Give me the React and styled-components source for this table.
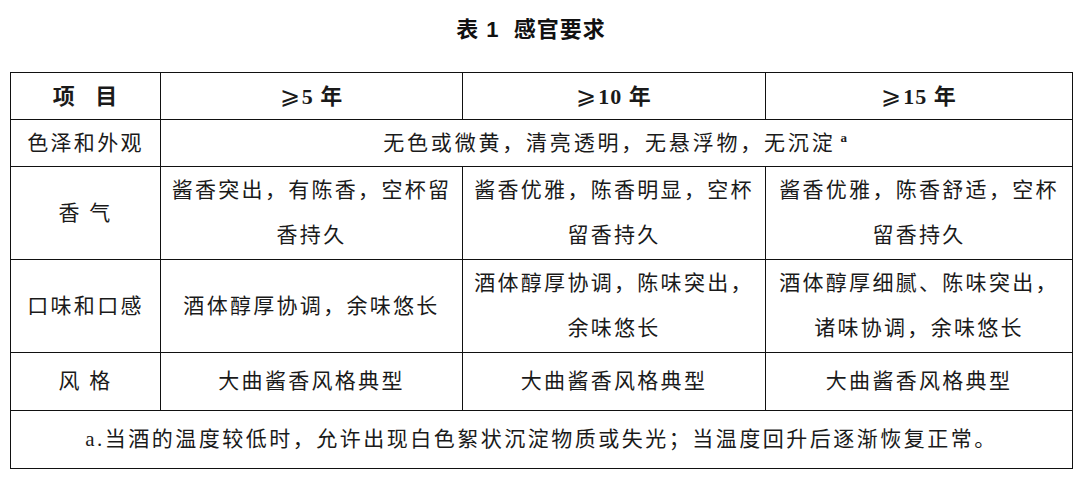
import styled, { createGlobalStyle } from "styled-components";

const GlobalStyle = createGlobalStyle`
  html, body {
    margin: 0;
    padding: 0;
    background: #fff;
  }
  body {
    font-family: "Liberation Serif", "Noto Sans CJK SC", serif;
    color: #1a1a1a;
  }
`;

const Page = styled.div`
  width: 1083px;
  height: 485px;
  padding: 17px 0 0 10px;
  box-sizing: border-box;
`;

const Title = styled.h1`
  margin: 0 0 29px 0;
  width: 1042px;
  text-align: center;
  font-family: "Liberation Sans", "Noto Sans CJK SC", sans-serif;
  font-size: 22px;
  line-height: 26px;
  font-weight: 700;
  letter-spacing: 1px;
  color: #111;
`;

const Table = styled.table`
  border-collapse: collapse;
  table-layout: fixed;
  width: 1062px;
`;

const Row = styled.tr`
  height: ${(p) => p.h}px;
`;

const Cell = styled.td`
  border: 1px solid #111;
  padding: 0;
  text-align: center;
  vertical-align: middle;
  font-size: 21px;
  letter-spacing: ${(p) => p.spacing || 2.3}px;
  line-height: 45px;
  font-weight: 400;
  white-space: nowrap;
`;

const HeadCell = styled(Cell)`
  font-weight: 700;
  font-size: 22px;
  letter-spacing: 1px;
`;

const Ge = styled.span`
  font-family: "DejaVu Serif", serif;
  font-weight: 400;
  font-size: 24px;
  margin-right: 1px;
`;

const Sup = styled.sup`
  font-size: 13px;
  font-weight: 700;
  vertical-align: 8px;
  line-height: 0;
  margin-left: 5px;
`;

const Year = ({ n }) => (
  <HeadCell>
    <Ge>⩾</Ge>
    {n} 年
  </HeadCell>
);

export default function App() {
  return (
    <Page>
      <GlobalStyle />
      <Title>表 1&nbsp;&nbsp;感官要求</Title>
      <Table>
        <colgroup>
          <col style={{ width: 150 }} />
          <col style={{ width: 302 }} />
          <col style={{ width: 303 }} />
          <col style={{ width: 307 }} />
        </colgroup>
        <tbody>
          <Row h={47}>
            <HeadCell>项&nbsp;&nbsp;&nbsp;目</HeadCell>
            <Year n="5" />
            <Year n="10" />
            <Year n="15" />
          </Row>
          <Row h={47}>
            <Cell>色泽和外观</Cell>
            <Cell colSpan={3} spacing={2.8}>
              无色或微黄，清亮透明，无悬浮物，无沉淀<Sup>a</Sup>
            </Cell>
          </Row>
          <Row h={93}>
            <Cell>香&nbsp;气</Cell>
            <Cell>
              酱香突出，有陈香，空杯留
              <br />
              香持久
            </Cell>
            <Cell>
              酱香优雅，陈香明显，空杯
              <br />
              留香持久
            </Cell>
            <Cell>
              酱香优雅，陈香舒适，空杯
              <br />
              留香持久
            </Cell>
          </Row>
          <Row h={93}>
            <Cell>口味和口感</Cell>
            <Cell>酒体醇厚协调，余味悠长</Cell>
            <Cell>
              酒体醇厚协调，陈味突出，
              <br />
              余味悠长
            </Cell>
            <Cell>
              酒体醇厚细腻、陈味突出，
              <br />
              诸味协调，余味悠长
            </Cell>
          </Row>
          <Row h={58}>
            <Cell>风&nbsp;格</Cell>
            <Cell>大曲酱香风格典型</Cell>
            <Cell>大曲酱香风格典型</Cell>
            <Cell>大曲酱香风格典型</Cell>
          </Row>
          <Row h={58}>
            <Cell colSpan={4} spacing={2.5}>
              a.当酒的温度较低时，允许出现白色絮状沉淀物质或失光；当温度回升后逐渐恢复正常。
            </Cell>
          </Row>
        </tbody>
      </Table>
    </Page>
  );
}
